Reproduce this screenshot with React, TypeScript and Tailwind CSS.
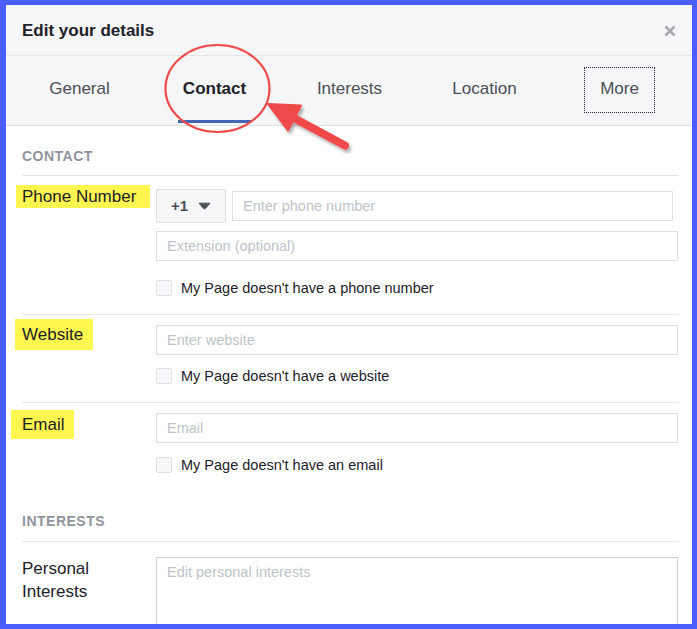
import React from "react";

const tabs = ["General", "Contact", "Interests", "Location"];

function Checkbox({ label }: { label: string }) {
  return (
    <label className="flex h-[16px] items-center gap-[9px] text-[14.5px] text-[#1d2129]">
      <span className="h-[16px] w-[16px] flex-none rounded-[2px] border border-[#dddfe2] bg-[#f6f7f9]" />
      <span className="leading-[16px]">{label}</span>
    </label>
  );
}

function TextInput({ placeholder, className = "" }: { placeholder: string; className?: string }) {
  return (
    <input
      placeholder={placeholder}
      className={`h-[30px] border border-[#dddfe2] bg-white px-[10px] text-[14.5px] text-[#1d2129] outline-none placeholder:text-[#bec3c9] ${className}`}
    />
  );
}

function CloseIcon() {
  return (
    <svg width="12" height="12" viewBox="0 0 12 12">
      <path d="M1.5 1.5 L10.5 10.5 M10.5 1.5 L1.5 10.5" stroke="#a7a9ac" strokeWidth="2.6" />
    </svg>
  );
}

function Annotations() {
  return (
    <svg className="pointer-events-none absolute left-0 top-0" width="697" height="629">
      <defs>
        <filter id="shadow" x="-20%" y="-20%" width="140%" height="140%">
          <feDropShadow dx="2" dy="3" stdDeviation="1.5" floodColor="#000" floodOpacity="0.3" />
        </filter>
      </defs>
      <ellipse cx="217.5" cy="88.5" rx="52" ry="43.5" fill="none" stroke="#f04a4a" strokeWidth="2.2" />
      <g filter="url(#shadow)">
        <line x1="292" y1="117" x2="345" y2="145.5" stroke="#f04a4a" strokeWidth="8" strokeLinecap="round" />
        <polygon points="268,104 301,105.5 288,130.5" fill="#f04a4a" stroke="#f04a4a" strokeWidth="2" strokeLinejoin="round" />
      </g>
    </svg>
  );
}

export default function App() {
  return (
    <div className="relative h-[629px] w-[697px] overflow-hidden bg-[#4a5dfd] pb-[5px] pl-[6px] pr-[5px] pt-[5px] font-['Liberation_Sans',Arial,sans-serif]">
      <div className="flex h-full flex-col overflow-hidden bg-white">
        {/* header */}
        <div className="flex h-[51px] flex-none items-center justify-between border-b border-[#e5e5e5] bg-[#f5f6f7] pl-[16px] pr-[16px] pt-[2px]">
          <h1 className="text-[17px] font-bold leading-[20px] text-[#1d2129]">Edit your details</h1>
          <CloseIcon />
        </div>

        {/* tabs */}
        <div className="flex h-[70px] flex-none border-b border-[#dddfe2] bg-[#f5f6f7] pl-[6px]">
          {tabs.map((t) => (
            <div key={t} className="flex h-full w-[135px] flex-col items-center">
              <span
                className={`pt-[23px] text-[17px] leading-[20px] ${
                  t === "Contact" ? "font-bold text-[#1d2129]" : "text-[#4b4f56]"
                }`}
              >
                {t}
              </span>
              {t === "Contact" && <span className="mb-[2px] mt-auto h-[3px] w-[73px] bg-[#4267b2]" />}
            </div>
          ))}
          <div className="flex w-[135px] justify-center">
            <div className="mt-[11px] flex h-[46px] w-[71px] items-center justify-center border border-dotted border-[#1d2129] pb-[2px] text-[17px] text-[#4b4f56]">
              More
            </div>
          </div>
        </div>

        {/* body */}
        <div className="flex-1 pl-[16px] pr-[14px]">
          <div className="border-b border-[#e5e5e5] pb-[9px] pt-[20px] text-[14px] font-bold leading-[20px] tracking-[0.5px] text-[#90949c]">
            CONTACT
          </div>

          {/* phone */}
          <div className="flex border-b border-[#e5e5e5] pb-[18px]">
            <div className="w-[134px] flex-none pt-[9px]">
              <span className="-ml-[6px] block h-[23px] w-[134px] bg-[#fff650] pl-[6px] text-[17px] leading-[23px] text-[#1d2129]">
                Phone Number
              </span>
            </div>
            <div className="flex-1 pt-[13px]">
              <div className="flex items-center gap-[6px]">
                <button className="flex h-[34px] w-[70px] flex-none items-center justify-center gap-[10px] rounded-[2px] border border-[#dddfe2] bg-[#f5f6f7] text-[15px] font-bold text-[#4b4f56]">
                  <span>+1</span>
                  <svg width="13" height="8" viewBox="0 0 13 8">
                    <path d="M1 1.2 L12 1.2 L7.3 6.6 Q6.5 7.4 5.7 6.6 Z" fill="#4b4f56" stroke="#4b4f56" strokeWidth="1" strokeLinejoin="round" />
                  </svg>
                </button>
                <TextInput placeholder="Enter phone number" className="w-[441px] flex-none" />
              </div>
              <TextInput placeholder="Extension (optional)" className="mt-[8px] block w-full" />
              <div className="mt-[19px]">
                <Checkbox label="My Page doesn't have a phone number" />
              </div>
            </div>
          </div>

          {/* website */}
          <div className="flex border-b border-[#e5e5e5] pb-[18px]">
            <div className="w-[134px] flex-none pt-[4px]">
              <span className="-ml-[7px] block h-[31px] w-[78px] bg-[#fff650] pl-[7px] text-[17px] leading-[31px] text-[#1d2129]">
                Website
              </span>
            </div>
            <div className="flex-1 pt-[10px]">
              <TextInput placeholder="Enter website" className="block w-full" />
              <div className="mt-[13px]">
                <Checkbox label="My Page doesn't have a website" />
              </div>
            </div>
          </div>

          {/* email */}
          <div className="flex">
            <div className="w-[134px] flex-none pt-[7px]">
              <span className="-ml-[11px] block h-[29px] w-[63px] bg-[#fff650] pl-[11px] text-[17px] leading-[29px] text-[#1d2129]">
                Email
              </span>
            </div>
            <div className="flex-1 pt-[10px]">
              <TextInput placeholder="Email" className="block w-full" />
              <div className="mt-[14px]">
                <Checkbox label="My Page doesn't have an email" />
              </div>
            </div>
          </div>

          <div className="mt-[38px] border-b border-[#e5e5e5] pb-[10px] text-[14px] font-bold leading-[20px] tracking-[0.5px] text-[#90949c]">
            INTERESTS
          </div>

          <div className="flex pt-[15px]">
            <div className="w-[134px] flex-none text-[17px] leading-[23px] text-[#1d2129]">
              Personal
              <br />
              Interests
            </div>
            <textarea
              placeholder="Edit personal interests"
              className="h-[90px] flex-1 resize-none border border-[#ccd0d5] px-[10px] py-[5px] text-[14.5px] leading-[18px] outline-none placeholder:text-[#bec3c9]"
            />
          </div>
        </div>
      </div>
      <Annotations />
    </div>
  );
}
